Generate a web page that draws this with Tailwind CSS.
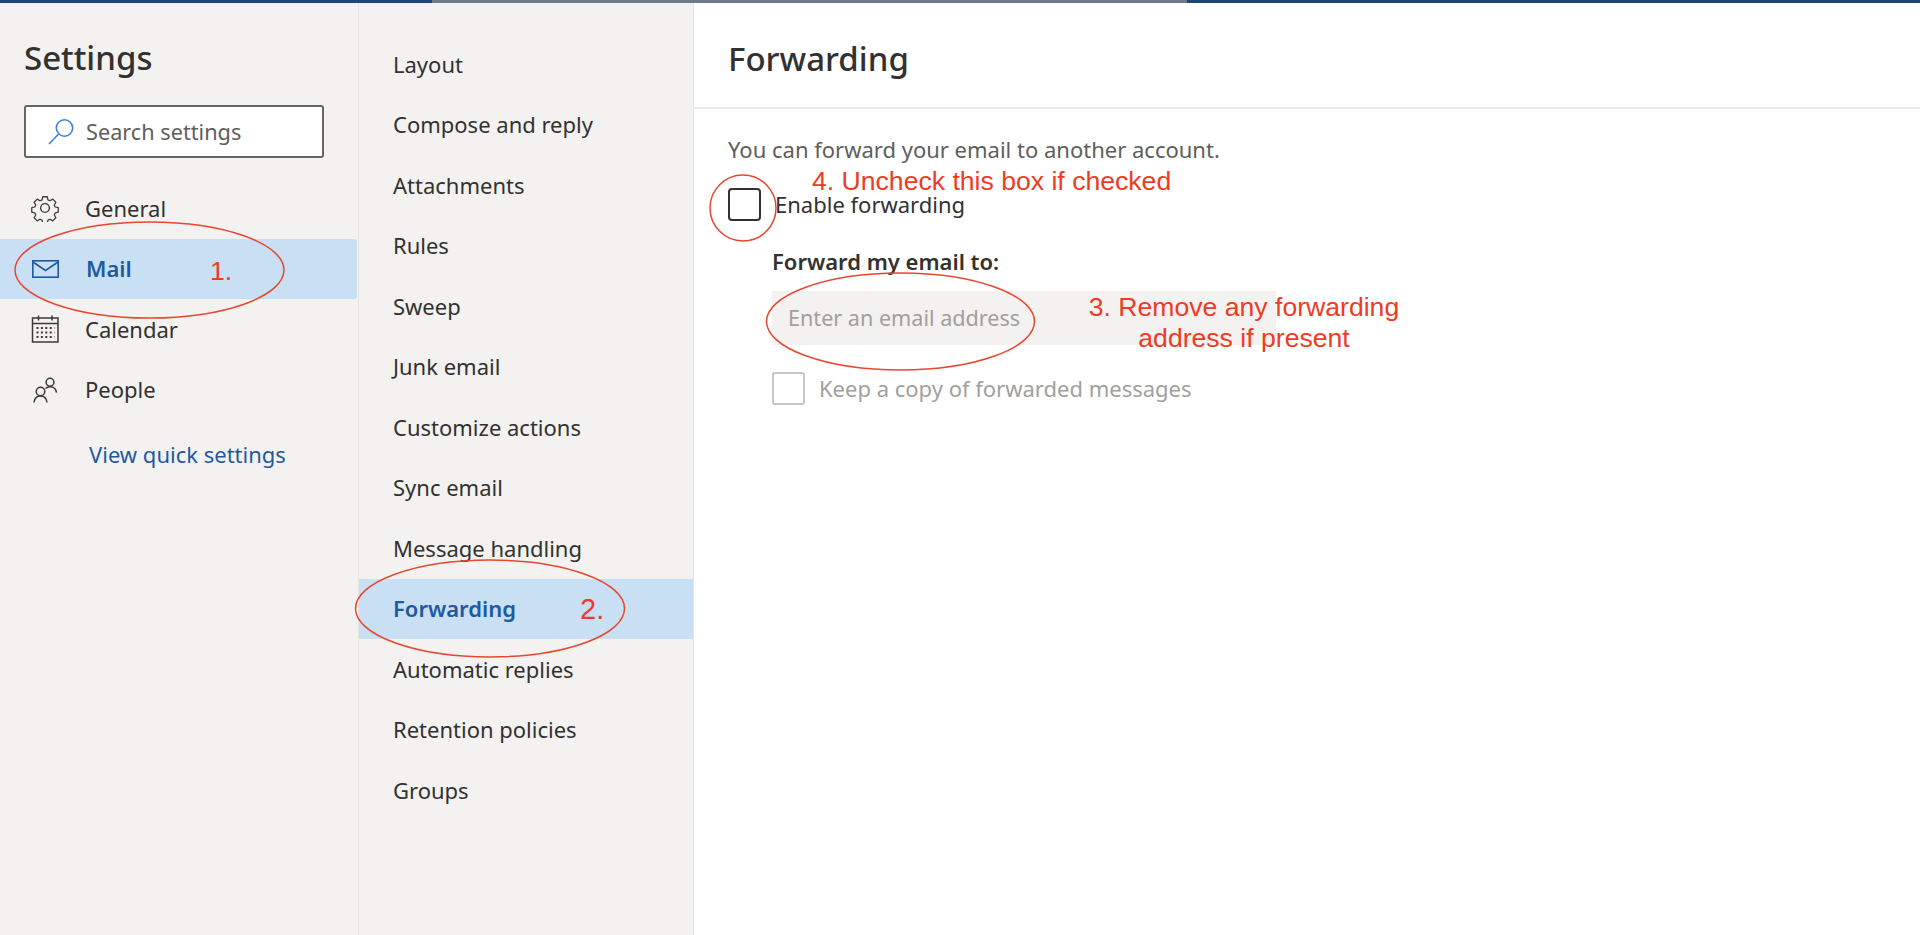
<!DOCTYPE html>
<html lang="en">
<head>
<meta charset="utf-8">
<title>Forwarding settings</title>
<script src="https://cdn.jsdelivr.net/npm/@tailwindcss/browser@4"></script>
</head>
<body class="m-0 overflow-hidden bg-white font-['Noto_Sans','Open_Sans',sans-serif] text-[#323130]">
<div class="relative flex h-[935px] w-[1920px] flex-col">
  <div class="flex h-[3px] shrink-0 bg-[#1d4678]">
    <div class="ml-[432px] w-[755px] bg-[#6c7a8a]"></div>
  </div>
  <div class="flex min-h-0 flex-1">
    <aside class="w-[359px] shrink-0 border-r border-[#e8e6e4] bg-[#f3f2f1]">
      <h1 class="mt-[32px] h-[46px] pl-6 text-[33px] leading-[46px] font-medium">Settings</h1>
      <div class="mt-[24px] ml-6 flex h-[53px] w-[300px] items-center rounded-[3px] border-2 border-[#666564] bg-white pl-[20px]">
        <svg class="h-[30px] w-[30px]" viewBox="0 0 30 30" fill="none" stroke="#3f82d4" stroke-width="1.6"><circle cx="18.5" cy="11" r="8.2"/><path d="M12.6 17 3 27"/></svg>
        <span class="mt-[2px] ml-[10px] text-[21.7px] text-[#605e5c]">Search settings</span>
      </div>
      <nav class="mt-[20px] mr-[1px]">
        <div class="flex h-[60.5px] items-center pl-[31px] text-[22px]">
          <svg class="h-[28px] w-[28px]" viewBox="0 0 28 28" fill="none" stroke="#3b3a39" stroke-width="1.4" stroke-linejoin="round"><path d="M11.5 1.500h5l.8 3.400 2.300 1 3-1.800 3.500 3.500-1.800 3 1 2.300 3.400.8v5l-3.400.8-1 2.300 1.800 3-3.500 3.500-3-1.800-2.300 1-.8 3.400h-5l-.8-3.400-2.300-1-3 1.800-3.500-3.500 1.800-3-1-2.300-3.400-.8v-5l3.400-.8 1-2.300-1.800-3 3.500-3.500 3 1.800 2.300-1z" transform="translate(1.400 1.400) scale(.9)"/><circle cx="14" cy="14" r="4.400"/></svg>
          <span class="ml-[26px]">General</span>
        </div>
        <div class="flex h-[60.5px] items-center rounded-r-[3px] bg-[#c9dff3] pl-[32px] text-[22px] font-semibold text-[#1f5aa0]">
          <svg class="h-[18px] w-[27px]" viewBox="0 0 27 18" fill="none" stroke="#1f5aa0" stroke-width="1.6"><rect x=".8" y=".8" width="25.400" height="16.400"/><path d="m1 2 12.500 8.500L26 2"/></svg>
          <span class="ml-[27px]">Mail</span>
        </div>
        <div class="flex h-[60.5px] items-center pl-[31px] text-[22px]">
          <svg class="h-[28px] w-[28px]" viewBox="0 0 28 28" fill="none" stroke="#3b3a39" stroke-width="1.500"><rect x="1.500" y="3" width="25.500" height="24"/><path d="M1.500 8.500h25.500M7.500 .5v5M21 .5v5"/><path stroke-width="2" stroke-dasharray="2 2.400" d="M5.500 13h18M5.500 17.500h18M5.500 22h18"/></svg>
          <span class="ml-[26px]">Calendar</span>
        </div>
        <div class="flex h-[60.5px] items-center pl-[31px] text-[22px]">
          <svg class="h-[28px] w-[28px]" viewBox="0 0 28 28" fill="none" stroke="#3b3a39" stroke-width="1.500"><circle cx="9.500" cy="15.500" r="4.300"/><path d="M3 26.500c.5-4 3-6.500 6.500-6.500s6 2.500 6.500 6.500"/><circle cx="19" cy="6.200" r="3.900"/><path d="M14.500 12.500c1.300-1.200 2.800-1.800 4.500-1.800 3.500 0 6 2.300 6.500 6"/></svg>
          <span class="ml-[26px]">People</span>
        </div>
      </nav>
      <a class="mt-[18px] ml-[89px] block text-[22px] text-[#1f5aa0]">View quick settings</a>
    </aside>
    <nav class="w-[335px] shrink-0 border-r border-[#e8e6e4] bg-[#f3f2f1] pt-[31px] text-[22px]">
      <div class="flex h-[60.5px] items-center pl-[34px]">Layout</div>
      <div class="flex h-[60.5px] items-center pl-[34px]">Compose and reply</div>
      <div class="flex h-[60.5px] items-center pl-[34px]">Attachments</div>
      <div class="flex h-[60.5px] items-center pl-[34px]">Rules</div>
      <div class="flex h-[60.5px] items-center pl-[34px]">Sweep</div>
      <div class="flex h-[60.5px] items-center pl-[34px]">Junk email</div>
      <div class="flex h-[60.5px] items-center pl-[34px]">Customize actions</div>
      <div class="flex h-[60.5px] items-center pl-[34px]">Sync email</div>
      <div class="flex h-[60.5px] items-center pl-[34px]">Message handling</div>
      <div class="flex h-[60.5px] items-center bg-[#c9dff3] pl-[34px] font-semibold text-[#1f5aa0]">Forwarding</div>
      <div class="flex h-[60.5px] items-center pl-[34px]">Automatic replies</div>
      <div class="flex h-[60.5px] items-center pl-[34px]">Retention policies</div>
      <div class="flex h-[60.5px] items-center pl-[34px]">Groups</div>
    </nav>
    <main class="min-w-0 flex-1 bg-white">
      <header class="flex h-[106px] items-center border-b-2 border-[#edebe9] pt-[8px] pl-[34px]">
        <h2 class="text-[33px] font-medium">Forwarding</h2>
      </header>
      <div class="pt-[26px] pl-[34px] text-[22px]">
        <p class="h-[28px] leading-[28px] text-[#605e5c]">You can forward your email to another account.</p>
        <label class="mt-[25px] flex h-[33px] items-center">
          <span class="h-[33px] w-[33px] rounded-[4px] border-2 border-[#323130]"></span>
          <span class="ml-[14px]">Enable forwarding</span>
        </label>
        <div class="pl-[44px]">
          <div class="mt-[26px] h-[28px] leading-[28px] font-semibold">Forward my email to:</div>
          <div class="mt-[16px] flex h-[54px] w-[504px] items-center rounded-[2px] bg-[#f3f2f1] pb-[1px] pl-[16px] text-[21.6px] text-[#a19f9d]"><span class="mt-[2px]">Enter an email address</span></div>
          <label class="mt-[27px] flex h-[33px] items-center text-[#a19f9d]">
            <span class="h-[33px] w-[33px] rounded-[3px] border-2 border-[#c8c6c4]"></span>
            <span class="ml-[14px]">Keep a copy of forwarded messages</span>
          </label>
        </div>
      </div>
    </main>
  </div>
  <svg class="pointer-events-none absolute top-0 left-0" width="1920" height="935" fill="none" stroke="#e8472f" stroke-width="1.500">
    <ellipse cx="149.500" cy="270" rx="134.500" ry="48"/>
    <ellipse cx="490" cy="608.500" rx="134.500" ry="48.500"/>
    <ellipse cx="743" cy="208" rx="33" ry="33"/>
    <ellipse cx="900.500" cy="321.500" rx="134" ry="48.500"/>
  </svg>
  <div class="pointer-events-none absolute inset-0 font-['Liberation_Sans',sans-serif] text-[26.6px] leading-[31px] text-[#ee3b24]">
    <span class="absolute top-[256px] left-[210px]">1.</span>
    <span class="absolute top-[594px] left-[580px] text-[29px]">2.</span>
    <span class="absolute top-[166px] left-[812px]">4. Uncheck this box if checked</span>
    <span class="absolute top-[292px] left-[1079px] w-[330px] text-center">3. Remove any forwarding<br>address if present</span>
  </div>
</div>
</body>
</html>
